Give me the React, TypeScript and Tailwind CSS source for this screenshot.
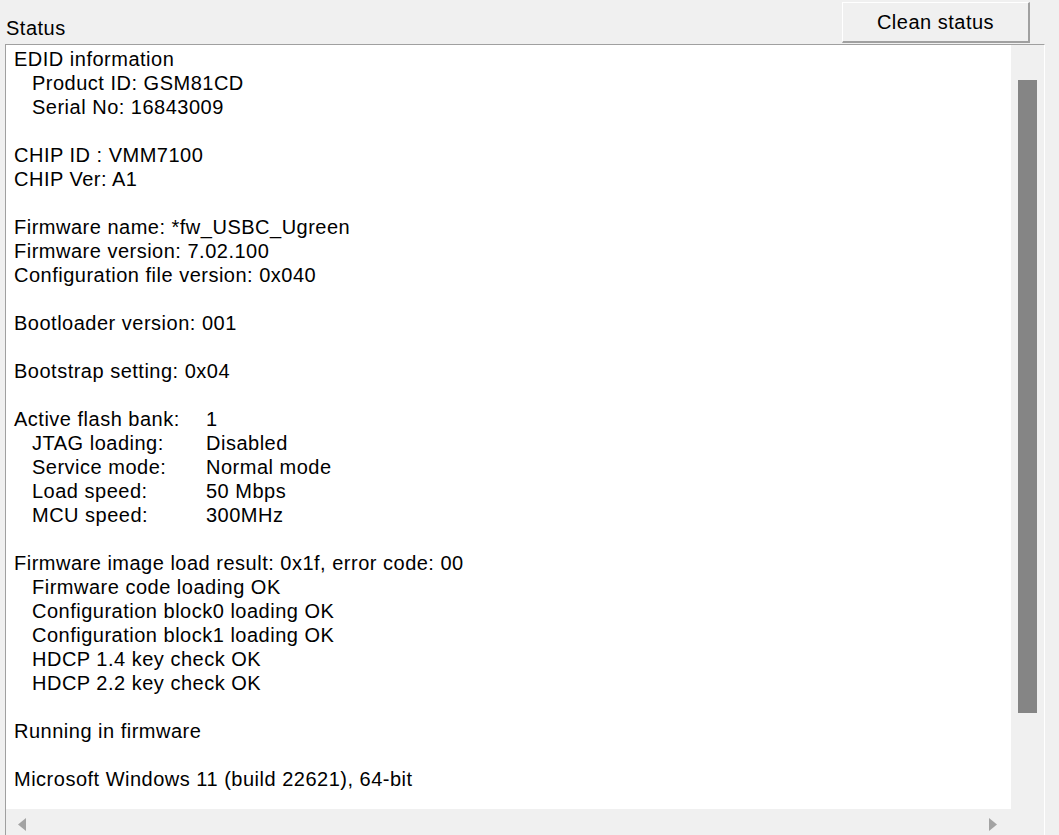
const LINES: { text?: string; label?: string; value?: string; indent?: boolean }[] = [
  { text: "EDID information" },
  { text: "Product ID: GSM81CD", indent: true },
  { text: "Serial No: 16843009", indent: true },
  {},
  { text: "CHIP ID : VMM7100" },
  { text: "CHIP Ver: A1" },
  {},
  { text: "Firmware name: *fw_USBC_Ugreen" },
  { text: "Firmware version: 7.02.100" },
  { text: "Configuration file version: 0x040" },
  {},
  { text: "Bootloader version: 001" },
  {},
  { text: "Bootstrap setting: 0x04" },
  {},
  { label: "Active flash bank:", value: "1" },
  { label: "JTAG loading:", value: "Disabled", indent: true },
  { label: "Service mode:", value: "Normal mode", indent: true },
  { label: "Load speed:", value: "50 Mbps", indent: true },
  { label: "MCU speed:", value: "300MHz", indent: true },
  {},
  { text: "Firmware image load result: 0x1f, error code: 00" },
  { text: "Firmware code loading OK", indent: true },
  { text: "Configuration block0 loading OK", indent: true },
  { text: "Configuration block1 loading OK", indent: true },
  { text: "HDCP 1.4 key check OK", indent: true },
  { text: "HDCP 2.2 key check OK", indent: true },
  {},
  { text: "Running in firmware" },
  {},
  { text: "Microsoft Windows 11 (build 22621), 64-bit" },
];

export default function App() {
  return (
    <div
      className="w-full h-[835px] bg-[#f0f0f0] overflow-hidden text-black text-[20px] leading-[24px] tracking-[0.5px]"
      style={{ fontFamily: '"Liberation Sans", Arial, sans-serif' }}
    >
      {/* header */}
      <div className="flex h-[44px] items-start">
        <span className="mt-[16px] ml-[6px]">Status</span>
        <button className="ml-auto mr-[29px] mt-[2px] h-[41px] w-[188px] bg-[#f0f0f0] border-t border-l border-white border-r-2 border-b-2 border-r-[#a0a0a0] border-b-[#a0a0a0] text-[20px] leading-[24px] tracking-[0.5px]">
          Clean status
        </button>
      </div>

      {/* status box */}
      <div className="ml-[5px] w-[1040px] h-[791px] border-t border-l border-r border-t-[#a0a0a0] border-l-[#a0a0a0] border-r-white flex flex-col">
        <div className="flex h-[764px]">
          <div className="w-[1005px] bg-white pt-[2px] pl-[8px] whitespace-pre">
            {LINES.map((l, i) => (
              <div key={i} className={`h-[24px] flex ${l.indent ? "pl-[18px]" : ""}`}>
                {l.label ? (
                  <>
                    <span className={l.indent ? "w-[174px]" : "w-[192px]"}>{l.label}</span>
                    <span>{l.value}</span>
                  </>
                ) : (
                  <span>{l.text}</span>
                )}
              </div>
            ))}
          </div>
          <div className="w-[33px] bg-[#f0f0f0]">
            <div className="mt-[35px] ml-[7px] w-[19px] h-[633px] bg-[#858585]" />
          </div>
        </div>
        <div className="flex h-[26px]">
          <div className="w-[1005px] flex items-center justify-between pl-[12px] pr-[14px] pt-[4px]">
            <svg width="9" height="13" viewBox="0 0 9 13">
              <path d="M8 0 L8 13 L0 6.5 Z" fill="#a3a3a3" />
            </svg>
            <svg width="9" height="13" viewBox="0 0 9 13">
              <path d="M1 0 L1 13 L9 6.5 Z" fill="#a3a3a3" />
            </svg>
          </div>
        </div>
      </div>
    </div>
  );
}
